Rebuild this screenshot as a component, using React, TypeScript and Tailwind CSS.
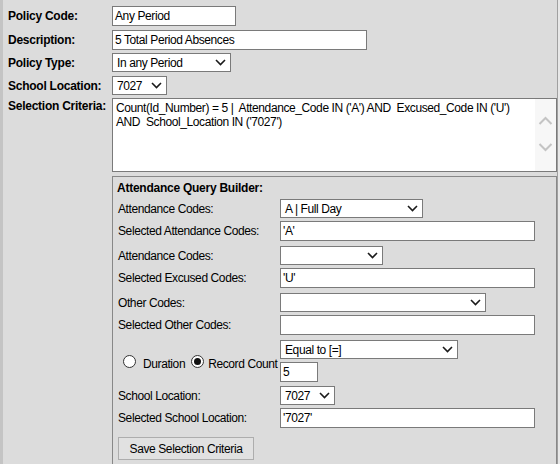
import React from 'react';

const font = "font-['Liberation_Sans',Arial,sans-serif]";

function Chevron() {
  return (
    <svg width="11" height="7" viewBox="0 0 11 7" className="shrink-0">
      <polyline points="1,1 5.5,5.5 10,1" fill="none" stroke="#1a1a1a" strokeWidth="1.6" />
    </svg>
  );
}

function Select({ value, w }: { value?: string; w: string }) {
  return (
    <div className={`${w} h-[19px] border border-[#7a7a7a] bg-white flex items-center justify-between pl-[4px] pr-[4px]`}>
      <span className="whitespace-pre">{value}</span>
      <Chevron />
    </div>
  );
}

function Input({ value, w }: { value?: string; w: string }) {
  return (
    <div className={`${w} h-[20px] border border-[#7a7a7a] bg-white flex items-center pl-[2px]`}>
      <span className="whitespace-pre">{value}</span>
    </div>
  );
}

function Radio({ checked }: { checked?: boolean }) {
  return (
    <div className="w-[13px] h-[13px] rounded-full border border-[#333] bg-white flex items-center justify-center shrink-0">
      {checked && <div className="w-[7px] h-[7px] rounded-full bg-[#111]" />}
    </div>
  );
}

function TopRow({ label, children, mt }: { label: string; children: React.ReactNode; mt: string }) {
  return (
    <div className={`flex items-center ${mt}`}>
      <div className="w-[104px] font-bold tracking-[-0.25px]">{label}</div>
      {children}
    </div>
  );
}

function Row({ label, children, mt }: { label: string; children: React.ReactNode; mt: string }) {
  return (
    <div className={`flex items-center ${mt}`}>
      <div className="w-[162px]">{label}</div>
      {children}
    </div>
  );
}

export default function App() {
  return (
    <div className={`w-[560px] h-[464px] overflow-hidden bg-[#dcdcdc] flex text-[12px] leading-[14px] text-black ${font}`}>
      <div className="w-[3px] bg-[#c4c4c4] shrink-0" />
      <div className="flex-1 pt-[6px] tracking-[-0.4px]">
        <div className="pl-[5px]">
          <TopRow label="Policy Code:" mt="">
            <Input value="Any Period" w="w-[124px]" />
          </TopRow>
          <TopRow label="Description:" mt="mt-[4px]">
            <Input value="5 Total Period Absences" w="w-[255px]" />
          </TopRow>
          <TopRow label="Policy Type:" mt="mt-[3px]">
            <Select value="In any Period" w="w-[119px]" />
          </TopRow>
          <TopRow label="School Location:" mt="mt-[4px]">
            <Select value="7027" w="w-[55px]" />
          </TopRow>
        </div>

        <div className="flex items-start mt-[3px] pl-[5px]">
          <div className="w-[104px] font-bold tracking-[-0.25px] pt-[1px]">Selection Criteria:</div>
          <div className="flex-1 h-[74px] border border-[#7a7a7a] bg-white flex">
            <div className="flex-1 pl-[3px] pt-[2px] whitespace-pre">
              {"Count(Id_Number) = 5 |  Attendance_Code IN ('A') AND  Excused_Code IN ('U')\nAND  School_Location IN ('7027')"}
            </div>
            <div className="w-[21px] bg-[#f7f7f7] flex flex-col items-center pt-[17px] gap-[18px]">
              <svg width="15" height="9" viewBox="0 0 15 9">
                <polyline points="1.5,8 7.5,2 13.5,8" fill="none" stroke="#c4c4c4" strokeWidth="2" />
              </svg>
              <svg width="15" height="9" viewBox="0 0 15 9">
                <polyline points="1.5,1 7.5,7 13.5,1" fill="none" stroke="#c4c4c4" strokeWidth="2" />
              </svg>
            </div>
          </div>
        </div>

        <div className="ml-[109px] mt-[4px] h-[300px] border border-[#888] pl-[5px] pt-[4px]">
          <div className="font-bold tracking-[-0.25px] -ml-[1px]">Attendance Query Builder:</div>
          <Row label="Attendance Codes:" mt="mt-[4px]">
            <Select value="A | Full Day" w="w-[143px]" />
          </Row>
          <Row label="Selected Attendance Codes:" mt="mt-[3px]">
            <Input value="'A'" w="w-[255px]" />
          </Row>
          <Row label="Attendance Codes:" mt="mt-[5px]">
            <Select w="w-[103px]" />
          </Row>
          <Row label="Selected Excused Codes:" mt="mt-[3px]">
            <Input value="'U'" w="w-[255px]" />
          </Row>
          <Row label="Other Codes:" mt="mt-[5px]">
            <Select w="w-[206px]" />
          </Row>
          <Row label="Selected Other Codes:" mt="mt-[3px]">
            <Input w="w-[255px]" />
          </Row>

          <div className="flex items-center mt-[5px]">
            <div className="w-[162px] flex items-center pl-[5px]">
              <Radio />
              <span className="ml-[7px] mt-[6px]">Duration</span>
              <div className="ml-[6px]">
                <Radio checked />
              </div>
              <span className="ml-[4px] mt-[6px]">Record Count</span>
            </div>
            <div className="flex flex-col">
              <Select value="Equal to [=]" w="w-[178px]" />
              <div className="mt-[3px]">
                <Input value="5" w="w-[38px]" />
              </div>
            </div>
          </div>

          <Row label="School Location:" mt="mt-[4px]">
            <Select value="7027" w="w-[55px]" />
          </Row>
          <Row label="Selected School Location:" mt="mt-[3px]">
            <Input value="'7027'" w="w-[255px]" />
          </Row>
          <div className="mt-[9px]">
            <div className="w-[136px] h-[23px] border border-[#adadad] bg-[#e1e1e1] flex items-center justify-center">
              Save Selection Criteria
            </div>
          </div>
        </div>
      </div>
      <div className="w-px bg-[#a0a0a0] shrink-0" />
      <div className="w-[2px] bg-[#e8e8e8] shrink-0" />
    </div>
  );
}
